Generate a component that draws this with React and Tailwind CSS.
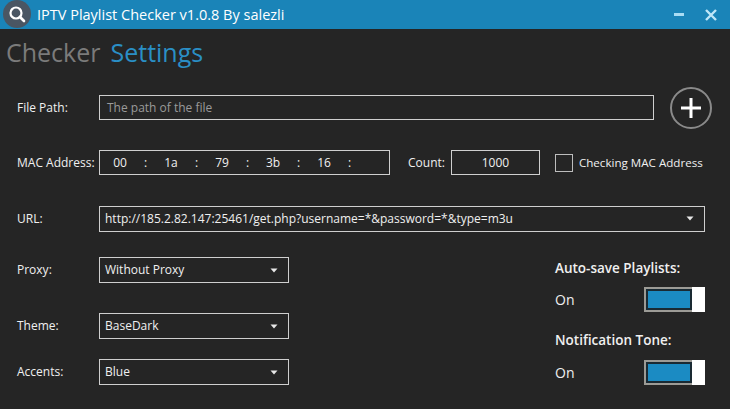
import React from "react";

function Arrow() {
    return (
        <svg width="8" height="5" viewBox="0 0 8 5" className="shrink-0">
            <path d="M0.5 0.5 H7.5 L4 4.5 Z" fill="#e8e8e8" />
        </svg>
    );
}

function Select({ value, width }) {
    return (
        <div
            className={`flex h-[26px] items-center justify-between border border-[#cfcfcf] pl-[5px] pr-[10px] text-[12px] text-[#f0f0f0] ${width}`}
        >
            <span>{value}</span>
            <Arrow />
        </div>
    );
}

function Toggle() {
    return (
        <div className="flex h-[25px] w-[61px] bg-[#9c9b96] p-[2px] pr-0">
            <div className="flex-1 border-2 border-[#1a2a33] bg-[#1b8bc3]" />
            <div className="-my-[2px] w-[13px] bg-white" />
        </div>
    );
}

function Label({ children }) {
    return <span className="w-[82px] shrink-0 text-[12px] text-[#f0f0f0]">{children}</span>;
}

export default function App() {
    const mac = ["00", "1a", "79", "3b", "16"];
    return (
        <div className="h-[409px] w-[730px] overflow-hidden bg-[#252525] font-['Open_Sans',sans-serif]">
            {/* title bar */}
            <div className="flex h-[29px] items-center bg-[#1a84b8]">
                <svg width="30" height="29" viewBox="0 0 30 29" className="ml-[2px] shrink-0">
                    <circle cx="15" cy="14" r="14" fill="#4a5663" />
                    <circle cx="14" cy="13" r="5.5" fill="none" stroke="#fff" strokeWidth="2.2" />
                    <path d="M18 17 L22 21" stroke="#fff" strokeWidth="2.6" strokeLinecap="round" />
                </svg>
                <span className="ml-[5px] text-[14.5px] text-white">IPTV Playlist Checker v1.0.8 By salezli</span>
                <div className="ml-auto flex items-center">
                    <div className="h-[3px] w-[10px] bg-[#a9dcf4]" />
                    <svg width="14" height="14" viewBox="0 0 14 14" className="ml-[20px] mr-[12px]">
                        <path d="M2 2 L12 12 M12 2 L2 12" stroke="#bfe6f8" strokeWidth="2.4" />
                    </svg>
                </div>
            </div>

            {/* tabs */}
            <div className="mt-[6px] flex h-[34px] items-center gap-[10px] pl-[6px] text-[25px] leading-none">
                <span className="text-[#7b7b7b]">Checker</span>
                <span className="text-[#2a8fc6]">Settings</span>
            </div>

            <div className="pl-[17px] pr-[18px]">
                {/* file path */}
                <div className="mt-[26px] flex h-[25px] items-center">
                    <Label>File Path:</Label>
                    <div className="flex h-[25px] w-[555px] shrink-0 items-center border border-[#cfcfcf] pl-[7px] text-[12px] text-[#9a9a9a]">
                        The path of the file
                    </div>
                    <div className="ml-[16px] flex h-[42px] w-[42px] shrink-0 items-center justify-center rounded-full border-2 border-[#8a8a8a]">
                        <svg width="22" height="22" viewBox="0 0 22 22">
                            <path d="M11 1 V21 M1 11 H21" stroke="#fff" strokeWidth="3" />
                        </svg>
                    </div>
                </div>

                {/* mac */}
                <div className="mt-[30px] flex h-[25px] items-center">
                    <Label>MAC Address:</Label>
                    <div className="flex h-[25px] w-[291px] items-center border border-[#cfcfcf] text-[12px] text-[#f0f0f0]">
                        {mac.map((m) => (
                            <div key={m} className="flex">
                                <span className="w-[40px] text-center">{m}</span>
                                <span className="w-[11px] text-center">:</span>
                            </div>
                        ))}
                    </div>
                    <span className="ml-[18px] text-[12px] text-[#f0f0f0]">Count:</span>
                    <div className="ml-[6px] flex h-[25px] w-[89px] items-center justify-center border border-[#cfcfcf] text-[12px] text-[#f0f0f0]">
                        1000
                    </div>
                    <div className="ml-[15px] h-[18px] w-[18px] border border-[#bdbdbd]" />
                    <span className="ml-[6px] text-[11.6px] text-[#f0f0f0]">Checking MAC Address</span>
                </div>

                {/* url */}
                <div className="mt-[31px] flex h-[25px] items-center">
                    <Label>URL:</Label>
                    <Select
                        width="w-[606px]"
                        value="http://185.2.82.147:25461/get.php?username=*&password=*&type=m3u"
                    />
                </div>

                {/* bottom */}
                <div className="mt-[26px] flex">
                    <div className="flex flex-col">
                        <div className="flex items-center">
                            <Label>Proxy:</Label>
                            <Select width="w-[190px]" value="Without Proxy" />
                        </div>
                        <div className="mt-[30px] flex items-center">
                            <Label>Theme:</Label>
                            <Select width="w-[190px]" value="BaseDark" />
                        </div>
                        <div className="mt-[20px] flex items-center">
                            <Label>Accents:</Label>
                            <Select width="w-[190px]" value="Blue" />
                        </div>
                    </div>
                    <div className="ml-auto mr-[7px] flex w-[150px] flex-col text-[#f0f0f0]">
                        <span className="mt-[1px] text-[13.5px] font-semibold">Auto-save Playlists:</span>
                        <div className="mt-[9px] flex items-center justify-between">
                            <span className="text-[14px]">On</span>
                            <Toggle />
                        </div>
                        <span className="mt-[18px] text-[13.5px] font-semibold">Notification Tone:</span>
                        <div className="mt-[9px] flex items-center justify-between">
                            <span className="text-[14px]">On</span>
                            <Toggle />
                        </div>
                    </div>
                </div>
            </div>
        </div>
    );
}
